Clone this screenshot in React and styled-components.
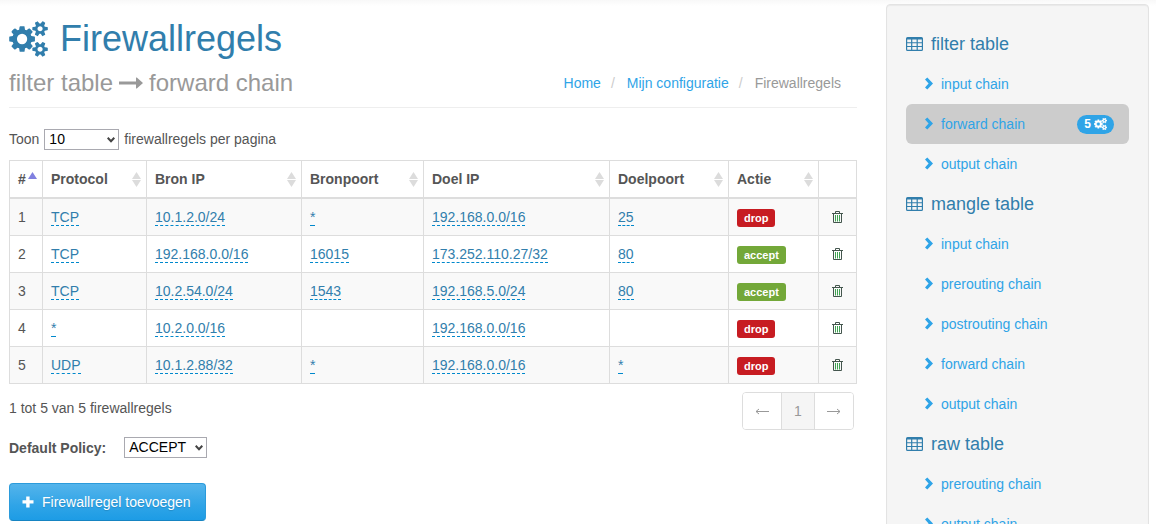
import React from "react";
import styled, { createGlobalStyle, css } from "styled-components";

const GlobalStyle = createGlobalStyle`
  *, *::before, *::after { box-sizing: border-box; }
  body {
    margin: 0;
    font: 14px/20px "Liberation Sans", Arial, sans-serif;
    color: #555;
    background: #fff linear-gradient(#f8f8f8, #fff 6px) no-repeat;
  }
  h1, h2, h3, p, ul, ol { margin: 0; padding: 0; font-weight: normal; }
  ul, ol { list-style: none; }
  button, select { font: inherit; }
  svg { display: block; flex: none; }
`;

const Page = styled.div`
  display: grid;
  grid-template-columns: minmax(0, 1fr) 263px;
  gap: 29px;
  align-items: start;
  padding: 4px 7px 20px 9px;
`;

const Main = styled.main`
  padding-top: 15px;
`;

const PageHeader = styled.header`
  display: grid;
  grid-template-columns: 1fr auto;
  align-items: center;
  row-gap: 11px;
  padding-bottom: 11px;
  margin-bottom: 20px;
  border-bottom: 1px solid #eee;
`;

const Title = styled.h1`
  grid-column: 1 / -1;
  display: flex;
  align-items: center;
  gap: 12px;
  font-size: 36px;
  line-height: 40px;
  color: #317eac;
`;

const Subtitle = styled.h2`
  display: flex;
  align-items: center;
  gap: 6px;
  font-size: 24px;
  line-height: 26px;
  color: #999;
`;

const Breadcrumb = styled.ol`
  display: flex;
  padding-right: 16px;
  color: #999;

  li + li::before {
    content: "/";
    padding: 0 12px 0 10px;
    color: #ccc;
  }
`;

const Link = styled.a`
  color: #2fa4e7;
  text-decoration: none;
`;

const LengthRow = styled.label`
  display: flex;
  align-items: center;
  gap: 5px;
  height: 22px;
  margin-bottom: 10px;
`;

const SelectBox = styled.span`
  position: relative;
  display: inline-block;
  width: ${(p) => p.$width}px;

  svg {
    position: absolute;
    right: 4px;
    top: 8px;
    pointer-events: none;
  }
`;

const Select = styled.select`
  appearance: none;
  display: block;
  width: 100%;
  height: 21px;
  padding: 0 4px;
  border: 1px solid #a9a9b0;
  border-radius: 0;
  background: #fff;
  color: #000;
  line-height: 19px;
`;

const RuleTable = styled.table`
  width: 100%;
  table-layout: fixed;
  border-collapse: collapse;

  th, td {
    border: 1px solid #ddd;
    text-align: left;
    line-height: 20px;
  }
  th {
    padding: 8px 5px 8px 8px;
    border-bottom-width: 2px;
  }
  td {
    padding: 8px;
    vertical-align: top;
  }
  tbody tr:nth-child(odd) { background: #f9f9f9; }
`;

const SortButton = styled.button`
  display: flex;
  align-items: center;
  justify-content: space-between;
  width: 100%;
  padding: 0;
  border: 0;
  background: none;
  color: inherit;
  font-weight: bold;
  line-height: 20px;
`;

const Editable = styled.a`
  color: #317eac;
  text-decoration: none;
  border-bottom: 1px dashed #0088cc;
`;

const ActionLabel = styled.span`
  display: block;
  width: fit-content;
  margin-top: 2px;
  padding: 0 7px;
  border-radius: 3px;
  background: ${(p) => (p.$kind === "drop" ? "#c71c22" : "#73a839")};
  color: #fff;
  font-size: 11px;
  font-weight: bold;
  line-height: 18px;
`;

const DeleteButton = styled.button`
  display: block;
  margin: 4px auto 0;
  padding: 0;
  border: 0;
  background: none;
`;

const TableFooter = styled.div`
  display: flex;
  justify-content: space-between;
  align-items: flex-start;
  padding: 8px 3px 0 0;

  p { padding-top: 6px; }
`;

const Pagination = styled.ul`
  display: flex;
  border: 1px solid #ddd;
  border-radius: 4px;
  overflow: hidden;

  li + li { border-left: 1px solid #ddd; }
`;

const PageLink = styled.a`
  display: flex;
  align-items: center;
  justify-content: center;
  width: ${(p) => (p.$current ? 32 : 38)}px;
  height: 36px;
  background: ${(p) => (p.$current ? "#f5f5f5" : "#fff")};
  color: #999;
  text-decoration: none;
`;

const PolicyRow = styled.div`
  display: flex;
  align-items: center;
  gap: 18px;
  margin: 7px 0 25px;

  label { font-weight: bold; }
`;

const AddButton = styled.button`
  display: inline-flex;
  align-items: center;
  gap: 8px;
  height: 38px;
  padding: 0 14px 0 12px;
  border: 1px solid #178acc;
  border-radius: 4px;
  border-color: #2b9bdb #2b9bdb #1684c2;
  background: linear-gradient(#54b4eb, #2fa4e7 60%, #1d9ce5);
  color: #fff;
  text-shadow: 0 1px 1px rgba(0, 0, 0, 0.15);
`;

const Sidebar = styled.nav`
  padding: 19px;
  border: 1px solid #e3e3e3;
  border-radius: 4px;
  background: #f5f5f5;
  box-shadow: inset 0 1px 1px rgba(0, 0, 0, 0.05);
`;

const GroupTitle = styled.h3`
  display: flex;
  align-items: center;
  gap: 8px;
  font-size: 18px;
  line-height: 40px;
  color: #317eac;
`;

const ChainLink = styled(Link)`
  display: flex;
  align-items: center;
  gap: 8px;
  height: 40px;
  padding: 0 15px 0 19px;
  border-radius: 6px;
  ${(p) => p.$active && css`background: #ccc;`}
`;

const Badge = styled.span`
  display: flex;
  align-items: center;
  gap: 3px;
  margin-left: auto;
  height: 19px;
  padding: 0 7px;
  border-radius: 10px;
  background: #2fa4e7;
  color: #fff;
  font-size: 12px;
  font-weight: bold;

  svg { stroke: #fff; stroke-width: 60px; }
`;

const SMALL_COG =
  "v-140q0 -16 -149 -31q-12 -27 -30 -52q51 -113 51 -138q0 -4 -4 -7q-122 -71 -124 -71q-8 0 -46 47t-52 68q-20 -2 -30 -2t-30 2q-14 -21 -52 -68t-46 -47q-2 0 -124 71q-4 3 -4 7q0 25 51 138q-18 25 -30 52q-149 15 -149 31v140q0 16 149 31q13 29 30 52q-51 113 -51 138q0 4 4 7q4 2 35 20t59 34t30 16q8 0 46 -46.5t52 -67.5q20 2 30 2t30 -2q51 71 92 112l6 2q4 0 124 -70q4 -3 4 -7q0 -25 -51 -138q17 -23 30 -52q149 -15 149 -31z";

const COGS =
  "M896 640q0 106 -75 181t-181 75t-181 -75t-75 -181t75 -181t181 -75t181 75t75 181zM1664 128q0 52 -38 90t-90 38t-90 -38t-38 -90q0 -53 37.5 -90.5t90.5 -37.5t90.5 37.5t37.5 90.5zM1664 1152q0 52 -38 90t-90 38t-90 -38t-38 -90q0 -53 37.5 -90.5t90.5 -37.5t90.5 37.5t37.5 90.5zM1280 731v-185q0 -10 -7 -19.5t-16 -10.5l-155 -24q-11 -35 -32 -76q34 -48 90 -115q7 -11 7 -20q0 -12 -7 -19q-23 -30 -82.5 -89.5t-78.5 -59.5q-11 0 -21 7l-115 90q-37 -19 -77 -31q-11 -108 -23 -155q-7 -24 -30 -24h-186q-11 0 -20 7.5t-10 17.5l-23 153q-34 10 -75 31l-118 -89q-7 -7 -20 -7q-11 0 -21 8q-144 133 -144 160q0 9 7 19q10 14 41 53t47 61q-23 44 -35 82l-152 24q-10 1 -17 9.5t-7 19.5v185q0 10 7 19.5t16 10.5l155 24q11 35 32 76q-34 48 -90 115q-7 11 -7 20q0 12 7 20q22 30 82 89t79 59q11 0 21 -7l115 -90q34 18 77 32q11 108 23 154q7 24 30 24h186q11 0 20 -7.5t10 -17.5l23 -153q34 -10 75 -31l118 89q8 7 20 7q11 0 21 -8q144 -133 144 -160q0 -8 -7 -19q-12 -16 -42 -54t-45 -60q23 -48 34 -82l152 -23q10 -2 17 -10.5t7 -19.5z" +
  "M1920 198" + SMALL_COG + "M1920 1222" + SMALL_COG;

const CogsIcon = ({ width, height }) => (
  <svg width={width} height={height} viewBox="0 -1536 1920 1792" fill="currentColor" aria-hidden="true">
    <path transform="scale(1 -1)" d={COGS} />
  </svg>
);

const LongArrowIcon = () => (
  <svg width="24" height="12" viewBox="0 0 24 12" fill="currentColor" aria-hidden="true">
    <path d="M0 4.500h17V1q0-.8.8-.4L24 6l-6.200 5.400q-.8.4-.8-.4V7.500H0z" />
  </svg>
);

const TableIcon = () => (
  <svg width="17" height="14" viewBox="0 0 17 14" fill="currentColor" fillRule="evenodd" aria-hidden="true">
    <path d="M1.500 0h14Q17 0 17 1.500v11q0 1.500-1.500 1.500h-14Q0 14 0 12.500v-11Q0 0 1.500 0zM1.200 2.500v2.700h3.900V2.500zM6.300 2.500v2.700h4.300V2.500zM11.800 2.500v2.700h4V2.500zM1.200 6.300v2.700h3.900V6.300zM6.300 6.300v2.700h4.300V6.300zM11.800 6.300v2.700h4V6.300zM1.200 10.100v2.700h3.900v-2.700zM6.300 10.100v2.700h4.300v-2.700zM11.800 10.100v2.700h4v-2.700z" />
  </svg>
);

const ChevronIcon = () => (
  <svg width="8" height="14" viewBox="0 0 8 14" fill="currentColor" aria-hidden="true">
    <path d="M0 2.600 2.300.5 8 6.500 2.300 12.600 0 10.400l3.600-3.900z" />
  </svg>
);

const PlusIcon = () => (
  <svg width="12" height="12" viewBox="0 0 12 12" fill="currentColor" aria-hidden="true">
    <path d="M4.200.5h3.400v3.700h3.900v3.400H7.600v3.900H4.200V7.600H.5V4.200h3.700z" />
  </svg>
);

const SelectArrow = () => (
  <svg width="8" height="6" viewBox="0 0 8 6" fill="none" stroke="#444" strokeWidth="2" aria-hidden="true">
    <path d="M.7.8 4 4.300 7.300.8" />
  </svg>
);

const SortIcon = ({ active }) => (
  <svg width="9" height="15" viewBox="0 0 9 15" aria-hidden="true">
    <path d="M4.500 0 9 7H0z" fill={active ? "#8080e0" : "#dcdcdc"} />
    {!active && <path d="M0 8h9l-4.500 7z" fill="#dcdcdc" />}
  </svg>
);

const TrashIcon = () => (
  <svg width="11" height="12" viewBox="0 0 11 12" fill="none" aria-hidden="true">
    <path d="M3.500 2V.5h4V2M0 2.500h11M1.500 3v8.500h8V3" stroke="#44564e" />
    <path d="M3.500 4v6.500M5.500 4v6.500M7.500 4v6.500" stroke="#3fa352" />
  </svg>
);

const PageArrow = ({ left }) => (
  <svg width="14" height="7" viewBox="0 0 14 7" fill="none" stroke="currentColor" aria-hidden="true">
    <path d={left ? "M14 3.500H1M4 1 1 3.500 4 6" : "M0 3.500h13M10 1l3 2.500L10 6"} />
  </svg>
);

const columns = [
  ["#", 33],
  ["Protocol", 104],
  ["Bron IP", 155],
  ["Bronpoort", 122],
  ["Doel IP", 186],
  ["Doelpoort", 119],
  ["Actie", 90],
];

const rules = [
  ["TCP", "10.1.2.0/24", "*", "192.168.0.0/16", "25", "drop"],
  ["TCP", "192.168.0.0/16", "16015", "173.252.110.27/32", "80", "accept"],
  ["TCP", "10.2.54.0/24", "1543", "192.168.5.0/24", "80", "accept"],
  ["*", "10.2.0.0/16", "", "192.168.0.0/16", "", "drop"],
  ["UDP", "10.1.2.88/32", "*", "192.168.0.0/16", "*", "drop"],
];

const groups = [
  { name: "filter table", chains: ["input chain", "forward chain", "output chain"], active: 1 },
  {
    name: "mangle table",
    chains: ["input chain", "prerouting chain", "postrouting chain", "forward chain", "output chain"],
  },
  { name: "raw table", chains: ["prerouting chain", "output chain"] },
];

export default function App() {
  return (
    <>
      <GlobalStyle />
      <Page>
        <Main>
          <PageHeader>
            <Title>
              <CogsIcon width={39} height={36} />
              Firewallregels
            </Title>
            <Subtitle>
              filter table <LongArrowIcon /> forward chain
            </Subtitle>
            <Breadcrumb>
              <li><Link href="#home">Home</Link></li>
              <li><Link href="#configuratie">Mijn configuratie</Link></li>
              <li>Firewallregels</li>
            </Breadcrumb>
          </PageHeader>

          <LengthRow>
            Toon
            <SelectBox $width={75}>
              <Select defaultValue="10">
                <option>10</option>
                <option>25</option>
                <option>50</option>
              </Select>
              <SelectArrow />
            </SelectBox>
            firewallregels per pagina
          </LengthRow>

          <RuleTable>
            <colgroup>
              {columns.map(([name, width]) => <col key={name} width={width} />)}
              <col width={38} />
            </colgroup>
            <thead>
              <tr>
                {columns.map(([name], i) => (
                  <th key={name} scope="col" aria-sort={i === 0 ? "ascending" : undefined}>
                    <SortButton type="button">
                      {name}
                      <SortIcon active={i === 0} />
                    </SortButton>
                  </th>
                ))}
                <th aria-label="Verwijderen" />
              </tr>
            </thead>
            <tbody>
              {rules.map((rule, i) => (
                <tr key={i}>
                  <td>{i + 1}</td>
                  {rule.slice(0, 5).map((value, j) => (
                    <td key={j}>{value && <Editable href="#bewerken">{value}</Editable>}</td>
                  ))}
                  <td><ActionLabel $kind={rule[5]}>{rule[5]}</ActionLabel></td>
                  <td>
                    <DeleteButton type="button" aria-label="Verwijderen"><TrashIcon /></DeleteButton>
                  </td>
                </tr>
              ))}
            </tbody>
          </RuleTable>

          <TableFooter>
            <p>1 tot 5 van 5 firewallregels</p>
            <Pagination>
              <li><PageLink href="#vorige" aria-label="Vorige"><PageArrow left /></PageLink></li>
              <li><PageLink href="#1" $current>1</PageLink></li>
              <li><PageLink href="#volgende" aria-label="Volgende"><PageArrow /></PageLink></li>
            </Pagination>
          </TableFooter>

          <PolicyRow>
            <label htmlFor="policy">Default Policy:</label>
            <SelectBox $width={83}>
              <Select id="policy" defaultValue="ACCEPT">
                <option>ACCEPT</option>
                <option>DROP</option>
              </Select>
              <SelectArrow />
            </SelectBox>
          </PolicyRow>

          <AddButton type="button">
            <PlusIcon />
            Firewallregel toevoegen
          </AddButton>
        </Main>

        <Sidebar>
          {groups.map((group) => (
            <section key={group.name}>
              <GroupTitle><TableIcon />{group.name}</GroupTitle>
              <ul>
                {group.chains.map((chain, i) => (
                  <li key={chain}>
                    <ChainLink href="#chain" $active={group.active === i}>
                      <ChevronIcon />
                      {chain}
                      {group.active === i && (
                        <Badge>5<CogsIcon width={13} height={12} /></Badge>
                      )}
                    </ChainLink>
                  </li>
                ))}
              </ul>
            </section>
          ))}
        </Sidebar>
      </Page>
    </>
  );
}
